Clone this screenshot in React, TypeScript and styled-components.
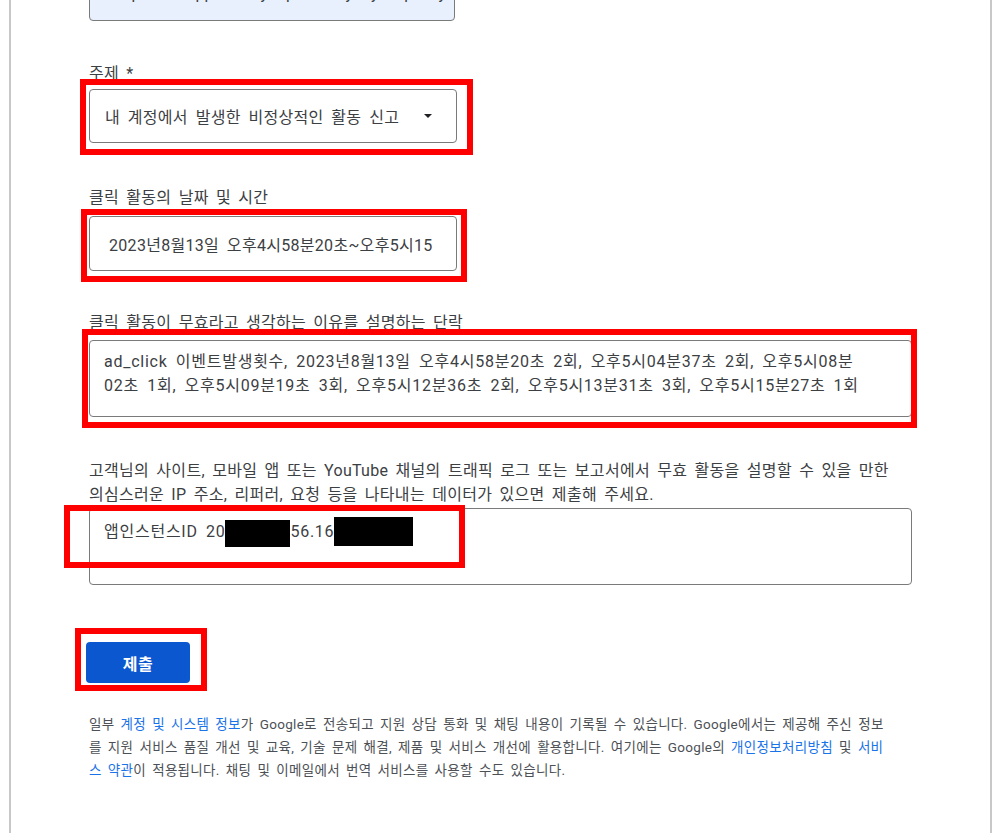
import styled, { createGlobalStyle } from "styled-components";

const GlobalStyle = createGlobalStyle`
  html, body {
    margin: 0;
    padding: 0;
    background: #ffffff;
    overflow: hidden;
  }
  body {
    font-family: "Roboto", "Noto Sans CJK KR", sans-serif;
    color: #3c4043;
  }
`;

const Page = styled.div`
  height: 833px;
  overflow: hidden;
  background: #ffffff;
`;

const Frame = styled.div`
  margin-left: 9px;
  width: 983px;
  height: 833px;
  box-sizing: border-box;
  border-left: 2px solid #c8c8c8;
  border-right: 2px solid #c8c8c8;
  padding-left: 78px;
  display: flex;
  flex-direction: column;
`;

const TopBox = styled.div`
  margin-top: -40px;
  width: 366px;
  height: 61px;
  border: 1px solid #7a7a7a;
  border-radius: 4px;
  background: #e8f0fe;
  padding: 21px 15px 0;
  box-sizing: border-box;
  font-size: 16px;
  line-height: 24px;
  overflow: hidden;
  white-space: nowrap;
`;

const Group = styled.div<{ $top: number }>`
  display: flex;
  flex-direction: column;
  margin-top: ${(p) => p.$top}px;
`;

const Label = styled.div<{ $gap: number }>`
  font-size: 16px;
  line-height: 24px;
  letter-spacing: 0.3px;
  word-spacing: 3px;
  color: #3c4043;
  margin-bottom: ${(p) => p.$gap}px;
  white-space: pre-line;
`;

const Marked = styled.div`
  position: relative;
  align-self: flex-start;
`;

const RedFrame = styled.div<{ $l: number; $t: number; $w: number; $h: number }>`
  position: absolute;
  left: ${(p) => p.$l}px;
  top: ${(p) => p.$t}px;
  width: ${(p) => p.$w}px;
  height: ${(p) => p.$h}px;
  border: 6px solid #ff0000;
  box-sizing: border-box;
  pointer-events: none;
`;

const Select = styled.div`
  width: 368px;
  height: 54px;
  box-sizing: border-box;
  border: 1px solid #7a7a7a;
  border-radius: 4px;
  display: flex;
  align-items: center;
  padding: 0 24px 0 15px;
  font-size: 16px;
  letter-spacing: 0.3px;
  word-spacing: 3.5px;
  color: #3c4043;
  justify-content: space-between;
`;

const Caret = styled.span`
  width: 0;
  height: 0;
  border-left: 4px solid transparent;
  border-right: 4px solid transparent;
  border-top: 4px solid #202124;
`;

const Input = styled.div`
  width: 368px;
  height: 55px;
  box-sizing: border-box;
  border: 1px solid #7a7a7a;
  border-radius: 4px;
  display: flex;
  align-items: center;
  padding: 0 19px;
  font-size: 16px;
  letter-spacing: 0.3px;
  word-spacing: 3.5px;
  color: #3c4043;
`;

const TextArea = styled.div`
  width: 823px;
  height: 77px;
  box-sizing: border-box;
  border: 1px solid #7a7a7a;
  border-radius: 4px;
  padding: 9px 14px;
  font-size: 16px;
  line-height: 24px;
  letter-spacing: 0.75px;
  word-spacing: 3.5px;
  color: #3c4043;
  white-space: pre-line;
`;

const Redact = styled.span<{ $w: number; $h: number; $shift: number }>`
  display: inline-block;
  width: ${(p) => p.$w}px;
  height: ${(p) => p.$h}px;
  background: #000000;
  vertical-align: middle;
  position: relative;
  top: ${(p) => p.$shift}px;
`;

const Button = styled.button`
  margin-left: -3px;
  width: 104px;
  height: 41px;
  border: none;
  border-radius: 4px;
  background: #0b57d0;
  color: #ffffff;
  font-family: "Roboto", "Noto Sans CJK KR", sans-serif;
  font-size: 16px;
  font-weight: 700;
  letter-spacing: 0.5px;
  cursor: pointer;
`;

const Footer = styled.p`
  margin: 30px 0 0;
  width: 840px;
  font-size: 13.5px;
  line-height: 23px;
  letter-spacing: 0.3px;
  word-spacing: 2.5px;
  color: #4d5156;
  white-space: pre-line;
`;

const Link = styled.a`
  color: #1a73e8;
  text-decoration: none;
`;

export default function App() {
  return (
    <Page>
      <GlobalStyle />
      <Frame>
        <TopBox>Suspicious app activity reported by my ad policy query</TopBox>

        <Group $top={41}>
          <Label $gap={3}>주제 *</Label>
          <Marked>
            <Select>
              <span>내 계정에서 발생한 비정상적인 활동 신고</span>
              <Caret />
            </Select>
            <RedFrame $l={-9} $t={-10} $w={393} $h={76} />
          </Marked>
        </Group>

        <Group $top={43}>
          <Label $gap={6}>클릭 활동의 날짜 및 시간</Label>
          <Marked>
            <Input>2023년8월13일 오후4시58분20초~오후5시15</Input>
            <RedFrame $l={-8} $t={-7} $w={386} $h={73} />
          </Marked>
        </Group>

        <Group $top={40}>
          <Label $gap={5}>클릭 활동이 무효라고 생각하는 이유를 설명하는 단락</Label>
          <Marked>
            <TextArea>
              {"ad_click 이벤트발생횟수, 2023년8월13일 오후4시58분20초 2회, 오후5시04분37초 2회, 오후5시08분\n02초 1회, 오후5시09분19초 3회, 오후5시12분36초 2회, 오후5시13분31초 3회, 오후5시15분27초 1회"}
            </TextArea>
            <RedFrame $l={-7} $t={-11} $w={835} $h={99} />
          </Marked>
        </Group>

        <Group $top={42}>
          <Label $gap={1}>
            {"고객님의 사이트, 모바일 앱 또는 YouTube 채널의 트래픽 로그 또는 보고서에서 무효 활동을 설명할 수 있을 만한\n의심스러운 IP 주소, 리퍼러, 요청 등을 나타내는 데이터가 있으면 제출해 주세요."}
          </Label>
          <Marked>
            <TextArea>
              앱인스턴스ID 20
              <Redact $w={65} $h={27} $shift={1} />
              56.16
              <Redact $w={79} $h={29} $shift={-1} />
            </TextArea>
            <RedFrame $l={-25} $t={-3} $w={401} $h={63} />
          </Marked>
        </Group>

        <Group $top={57}>
          <Marked>
            <Button>제출</Button>
            <RedFrame $l={-14} $t={-14} $w={132} $h={63} />
          </Marked>
        </Group>

        <Footer>
          일부 <Link href="#">계정 및 시스템 정보</Link>가 Google로 전송되고 지원 상담 통화 및 채팅 내용이 기록될 수 있습니다. Google에서는 제공해 주신 정보
          {"\n"}를 지원 서비스 품질 개선 및 교육, 기술 문제 해결, 제품 및 서비스 개선에 활용합니다. 여기에는 Google의{" "}
          <Link href="#">개인정보처리방침</Link> 및 <Link href="#">서비</Link>
          {"\n"}
          <Link href="#">스 약관</Link>이 적용됩니다. 채팅 및 이메일에서 번역 서비스를 사용할 수도 있습니다.
        </Footer>
      </Frame>
    </Page>
  );
}
